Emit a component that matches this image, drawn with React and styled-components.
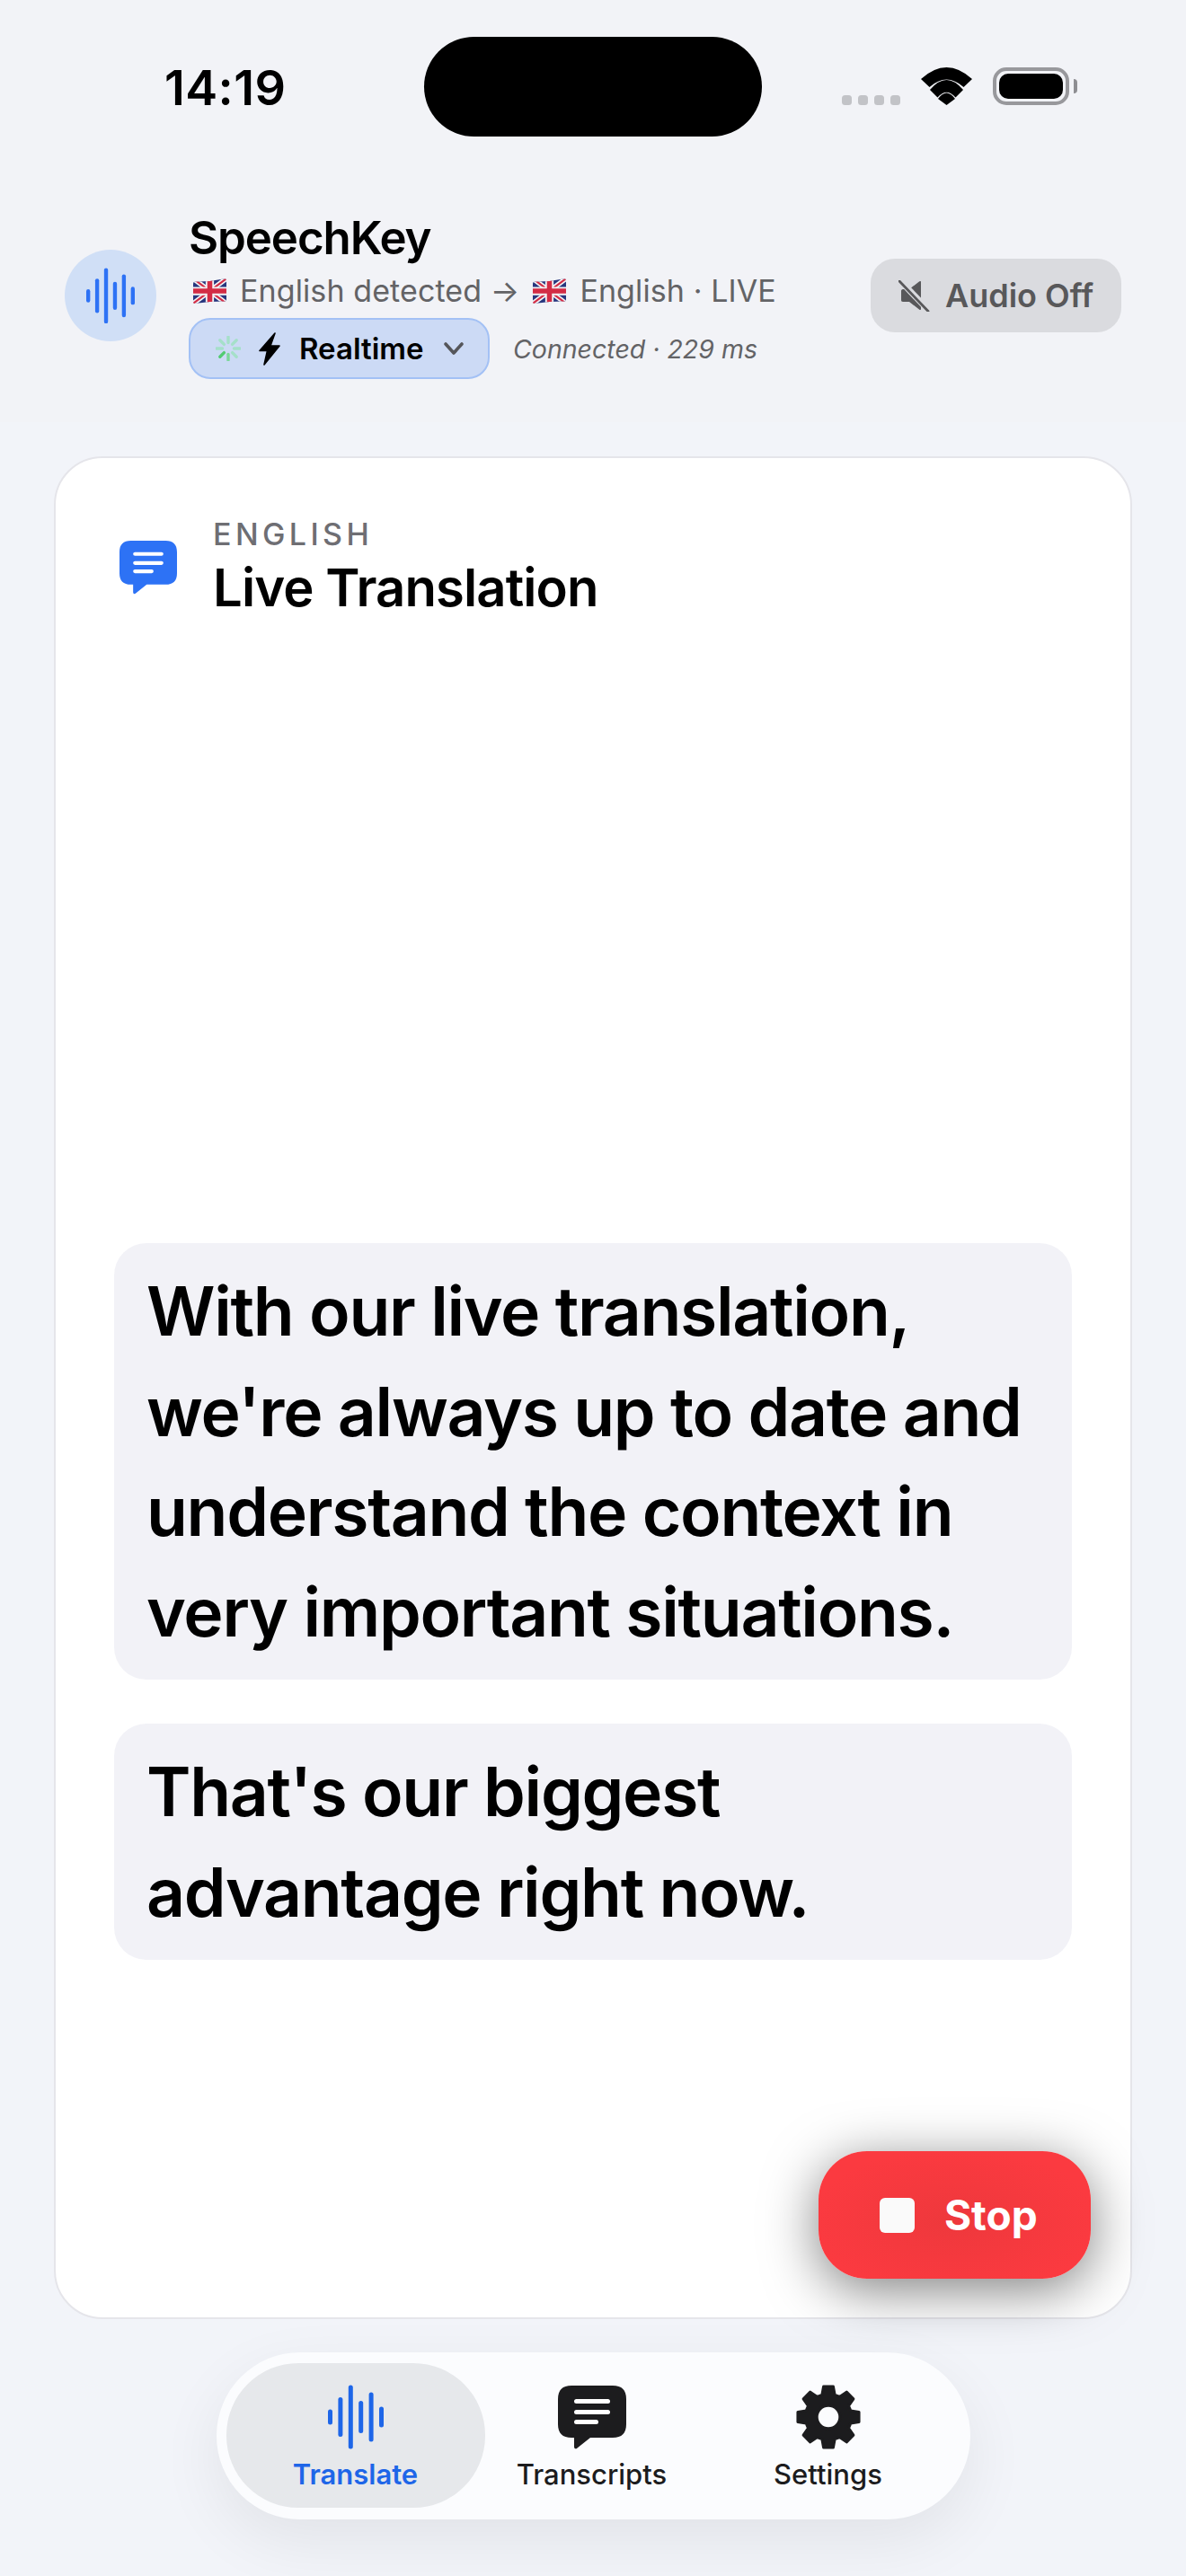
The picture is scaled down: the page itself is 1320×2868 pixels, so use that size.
import React from "react";
import styled, { createGlobalStyle } from "styled-components";

const Global = createGlobalStyle`
  html, body { margin: 0; padding: 0; background: #f2f4f9; }
  * { box-sizing: border-box; }
  body { font-family: Inter, "Noto Sans", "Liberation Sans", sans-serif; color: #000; }
`;

const Page = styled.div`
  width: 1320px;
  height: 2868px;
  display: flex;
  flex-direction: column;
  overflow: hidden;
  background: #f2f4f9;
`;

const Top = styled.div`
  background: #f2f3f7;
  height: 470px;
  flex: none;
`;

const StatusBar = styled.div`
  display: grid;
  grid-template-columns: 472px 376px 1fr;
  height: 197px;
  padding-top: 41px;
`;

const Time = styled.div`
  padding-left: 183px;
  padding-top: 30px;
  font-size: 54px;
  line-height: 54px;
  font-weight: 600;
  letter-spacing: 0.4px;
`;

const Island = styled.div`
  height: 111px;
  background: #000;
  border-radius: 56px;
`;

const StatusIcons = styled.div`
  display: flex;
  align-items: flex-end;
  height: 42px;
  margin-top: 34px;
  padding-left: 89px;
`;

const Dots = styled.div`
  display: flex;
  gap: 7px;
  margin-right: 23px;
`;

const Dot = styled.span`
  width: 11px;
  height: 11px;
  border-radius: 3.5px;
  background: #c2c3c7;
`;

const Battery = styled.div`
  position: relative;
  width: 85px;
  height: 42px;
  margin-left: 23px;
  padding: 3px;
  border: 4px solid #98989c;
  border-radius: 15px;
`;

const BatteryFill = styled.div`
  width: 100%;
  height: 100%;
  background: #000;
  border-radius: 10px;
`;

const BatteryCap = styled.div`
  position: absolute;
  right: -13px;
  top: 9px;
  width: 4px;
  height: 16px;
  background: #8e8e92;
  border-radius: 0 4px 4px 0;
`;

const Header = styled.div`
  display: flex;
  align-items: flex-start;
  padding: 36px 72px 0;
`;

const Avatar = styled.div`
  flex: none;
  width: 102px;
  height: 102px;
  margin-top: 45px;
  margin-right: 36px;
  border-radius: 50%;
  background: #d0dff6;
  display: flex;
  align-items: center;
  justify-content: center;
  color: #2d72f5;
`;

const HeaderText = styled.div`
  flex: 1;
  display: flex;
  flex-direction: column;
  align-items: flex-start;
`;

const Title = styled.div`
  font-size: 51px;
  line-height: 60px;
  font-weight: 600;
  letter-spacing: -1.1px;
  margin-top: 2px;
  margin-bottom: 7px;
`;

const Sub = styled.div`
  display: flex;
  align-items: center;
  height: 44px;
  font-size: 34px;
  line-height: 44px;
  letter-spacing: 0.1px;
  color: #636366;
  padding-left: 5px;
  white-space: pre;
`;

const Gap = styled.span`
  display: inline-block;
  width: ${(p) => p.$w}px;
`;

const ModeRow = styled.div`
  display: flex;
  align-items: center;
  margin-top: 8px;
`;

const ModePill = styled.div`
  display: flex;
  align-items: center;
  width: 335px;
  height: 68px;
  padding-left: 28px;
  border: 2px solid #a3c1f5;
  border-radius: 24px;
  background: #ccdaf5;
  font-size: 33px;
  font-weight: 600;
`;

const ModeLabel = styled.span`
  margin-left: 21px;
  margin-right: 22px;
`;

const Conn = styled.div`
  margin-left: 26px;
  font-size: 28.5px;
  font-style: italic;
  color: #636366;
`;

const AudioBtn = styled.div`
  flex: none;
  margin-top: 55px;
  width: 279px;
  height: 82px;
  display: flex;
  align-items: center;
  padding-left: 31px;
  gap: 17px;
  border-radius: 27px;
  background: #dadbdf;
  color: #58585a;
  font-size: 36px;
  font-weight: 600;
`;

const Main = styled.div`
  flex: 1;
  display: flex;
  flex-direction: column;
  padding: 38px 60px 0;
`;

const Card = styled.div`
  position: relative;
  height: 2074px;
  flex: none;
  display: flex;
  flex-direction: column;
  padding: 0 65px 398px;
  background: #fff;
  border: 2px solid #e5e5ea;
  border-radius: 54px;
`;

const CardHead = styled.div`
  display: flex;
  align-items: flex-start;
  margin-left: 6px;
  padding-top: 65px;
  color: #2d72f5;
`;

const CardHeadIcon = styled.div`
  margin-top: 27px;
  margin-right: 40px;
  line-height: 0;
`;

const Eyebrow = styled.div`
  font-size: 34px;
  line-height: 40px;
  font-weight: 500;
  letter-spacing: 4.4px;
  margin-bottom: 3px;
  color: #6e6e73;
`;

const CardTitle = styled.div`
  font-size: 58px;
  line-height: 72px;
  font-weight: 600;
  letter-spacing: -0.9px;
  color: #000;
`;

const Messages = styled.div`
  margin-top: auto;
  display: flex;
  flex-direction: column;
  gap: 49px;
`;

const Bubble = styled.div`
  padding: 20px 36px;
  border-radius: 36px;
  background: #f2f2f7;
  font-size: 75px;
  line-height: 111.5px;
  font-weight: 600;
  letter-spacing: -1.3px;
`;

const StopBtn = styled.div`
  position: absolute;
  right: 44px;
  bottom: 43px;
  width: 303px;
  height: 142px;
  display: flex;
  align-items: center;
  padding-left: 68px;
  gap: 33px;
  border-radius: 54px;
  background: radial-gradient(ellipse at 50% 55%, #ee383c 0%, #fb3a40 75%);
  box-shadow: 0 12px 60px rgba(0, 0, 0, 0.5);
  color: #fff;
  font-size: 46px;
  font-weight: 700;
`;

const StopSquare = styled.span`
  width: 39px;
  height: 39px;
  border-radius: 6px;
  background: #fafafa;
`;

const Nav = styled.div`
  align-self: center;
  margin-top: 37px;
  width: 839px;
  height: 186px;
  display: flex;
  padding: 12px 11px;
  border-radius: 93px;
  background: #fbfcfe;
  box-shadow: 0 24px 70px rgba(0, 0, 0, 0.07);
`;

const NavItem = styled.div`
  flex: none;
  width: 288px;
  height: 161px;
  padding-top: 24px;
  display: flex;
  flex-direction: column;
  align-items: center;
  border-radius: 80px;
  background: ${(p) => (p.$active ? "#e6e8eb" : "transparent")};
  color: ${(p) => (p.$active ? "#1e66e8" : "#1c1c1e")};
  & + & {
    margin-left: -25px;
  }
`;

const NavIcon = styled.div`
  height: 72px;
  display: flex;
  align-items: center;
  justify-content: center;
`;

const NavLabel = styled.div`
  margin-top: 10px;
  font-size: 31px;
  line-height: 36px;
  font-weight: ${(p) => (p.$active ? 600 : 500)};
`;

const WAVE = [
  [0, 17],
  [11.4, 44],
  [22.8, 71],
  [34.2, 36],
  [45.6, 55],
  [57, 23],
];

const Waveform = ({ width }) => (
  <svg width={width} height={(width * 72) / 62} viewBox="0 0 62 72" fill="currentColor">
    {WAVE.map(([x, h]) => (
      <rect key={x} x={x} y={36 - h / 2} width="5" height={h} rx="2.5" />
    ))}
  </svg>
);

const ChatIcon = ({ width, lines = "#fff" }) => (
  <svg width={width} height={(width * 71) / 76} viewBox="0 0 76 71">
    <path
      fill="currentColor"
      d="M15 0H61C71 0 76 5 76 15V43C76 53 71 58 61 58H36L21.5 69.5C20 71 18 70.5 18 68V58H15C5 58 0 53 0 43V15C0 5 5 0 15 0Z"
    />
    <g fill={lines}>
      <rect x="18" y="15" width="40" height="5" rx="2.5" />
      <rect x="18" y="27" width="40" height="5" rx="2.5" />
      <rect x="18" y="38" width="27" height="5" rx="2.5" />
    </g>
  </svg>
);

const gearPath = (() => {
  const pts = [];
  const pol = (r, deg) => {
    const a = (deg * Math.PI) / 180;
    return `${(36 + r * Math.cos(a)).toFixed(2)} ${(36 + r * Math.sin(a)).toFixed(2)}`;
  };
  for (let i = 0; i < 8; i++) {
    const c = i * 45 - 90;
    pts.push(pol(25, c - 16), pol(33.5, c - 9), pol(33.5, c + 9), pol(25, c + 16));
  }
  return `M${pts.join("L")}Z`;
})();

const GearIcon = () => (
  <svg width="74" height="74" viewBox="0 0 72 72">
    <path
      d={`${gearPath}M36 23.5A12.5 12.5 0 1 0 36 48.5A12.5 12.5 0 1 0 36 23.5Z`}
      fill="currentColor"
      stroke="currentColor"
      strokeWidth="3"
      strokeLinejoin="round"
      fillRule="evenodd"
    />
  </svg>
);

const Flag = () => (
  <svg width="37" height="28" viewBox="0 0 60 45" style={{ flex: "none" }}>
    <defs>
      <clipPath id="flagclip">
        <path d="M3 6Q30 6 57 0Q60 0 60 3V38Q60 41 57 41Q30 41 3 45Q0 45 0 42V9Q0 6 3 6Z" />
      </clipPath>
    </defs>
    <g clipPath="url(#flagclip)">
      <rect width="60" height="45" fill="#27367e" />
      <path d="M0 0L60 45M60 0L0 45" stroke="#f3f3f5" strokeWidth="9" />
      <path d="M0 0L60 45M60 0L0 45" stroke="#d32c45" strokeWidth="3.5" />
      <path d="M30 0V45M0 22.5H60" stroke="#f3f3f5" strokeWidth="15" />
      <path d="M30 0V45M0 22.5H60" stroke="#d32c45" strokeWidth="9" />
    </g>
  </svg>
);

const Spinner = () => {
  const colors = ["#a5e0c9", "#a5e0c9", "#a5e0c9", "#a5e0c9", "#7bd79a", "#52cb72", "#a5e0c9", "#a5e0c9"];
  return (
    <svg width="28" height="28" viewBox="-14 -14 28 28" style={{ flex: "none" }}>
      {colors.map((c, i) => (
        <line
          key={i}
          x1="0"
          y1="-6.5"
          x2="0"
          y2="-13"
          stroke={c}
          strokeWidth="3.4"
          strokeLinecap="round"
          transform={`rotate(${i * 45})`}
        />
      ))}
    </svg>
  );
};

const Bolt = () => (
  <svg width="24" height="37" viewBox="0 0 24 37" style={{ flex: "none", marginLeft: 20 }}>
    <path
      d="M18 1L1 20.5H9.5L6 36L23 15H13Z"
      fill="#000"
      stroke="#000"
      strokeWidth="1.6"
      strokeLinejoin="round"
    />
  </svg>
);

const Chevron = () => (
  <svg width="22" height="15" viewBox="0 0 22 15" style={{ flex: "none" }}>
    <path d="M2 2L11 12L20 2" fill="none" stroke="#55565a" strokeWidth="3.6" strokeLinecap="round" strokeLinejoin="round" />
  </svg>
);

const MuteIcon = () => (
  <svg width="35" height="35" viewBox="0 0 35 35" style={{ flex: "none" }}>
    <path
      d="M25 2V32C25 33 24 33.5 23 32.5L12 24H5C3.500 24 3 23 3 22V12C3 11 3.500 10 5 10H12L23 1.500C24 0.500 25 1 25 2Z"
      fill="#58585a"
    />
    <path d="M0 -1.500L33 33" stroke="#dadbdf" strokeWidth="7" />
    <path d="M1 1L33 34.500" stroke="#58585a" strokeWidth="2.800" strokeLinecap="round" />
  </svg>
);

const Wifi = () => (
  <svg width="57" height="42" viewBox="0 0 57 42" fill="#000">
    <path d="M0 13Q28.500 -13 57 13L47.500 22Q28.500 5 9.500 22Z" />
    <path d="M10 25Q28.500 3 47 25L38.500 33.500Q28.500 22 18.500 33.500Z" />
    <path d="M19 35Q28.500 22 38 35L28.500 42Z" />
  </svg>
);

export default function App() {
  return (
    <Page>
      <Global />
      <Top>
        <StatusBar>
          <Time>14:19</Time>
          <Island />
          <StatusIcons>
            <Dots>
              <Dot />
              <Dot />
              <Dot />
              <Dot />
            </Dots>
            <Wifi />
            <Battery>
              <BatteryFill />
              <BatteryCap />
            </Battery>
          </StatusIcons>
        </StatusBar>
        <Header>
          <Avatar>
            <Waveform width={54} />
          </Avatar>
          <HeaderText>
            <Title>SpeechKey</Title>
            <Sub>
              <Flag />
              <Gap $w={15} />
              English detected →
              <Gap $w={15} />
              <Flag />
              <Gap $w={15} />
              English · LIVE
            </Sub>
            <ModeRow>
              <ModePill>
                <Spinner />
                <Bolt />
                <ModeLabel>Realtime</ModeLabel>
                <Chevron />
              </ModePill>
              <Conn>Connected · 229 ms</Conn>
            </ModeRow>
          </HeaderText>
          <AudioBtn>
            <MuteIcon />
            Audio Off
          </AudioBtn>
        </Header>
      </Top>
      <Main>
        <Card>
          <CardHead>
            <CardHeadIcon>
              <ChatIcon width={64} />
            </CardHeadIcon>
            <div>
              <Eyebrow>ENGLISH</Eyebrow>
              <CardTitle>Live Translation</CardTitle>
            </div>
          </CardHead>
          <Messages>
            <Bubble>
              With our live translation, we're always up to date and understand the context in very important situations.
            </Bubble>
            <Bubble>That's our biggest advantage right now.</Bubble>
          </Messages>
          <StopBtn>
            <StopSquare />
            Stop
          </StopBtn>
        </Card>
        <Nav>
          <NavItem $active>
            <NavIcon>
              <Waveform width={62} />
            </NavIcon>
            <NavLabel $active>Translate</NavLabel>
          </NavItem>
          <NavItem>
            <NavIcon>
              <ChatIcon width={76} />
            </NavIcon>
            <NavLabel>Transcripts</NavLabel>
          </NavItem>
          <NavItem>
            <NavIcon>
              <GearIcon />
            </NavIcon>
            <NavLabel>Settings</NavLabel>
          </NavItem>
        </Nav>
      </Main>
    </Page>
  );
}
